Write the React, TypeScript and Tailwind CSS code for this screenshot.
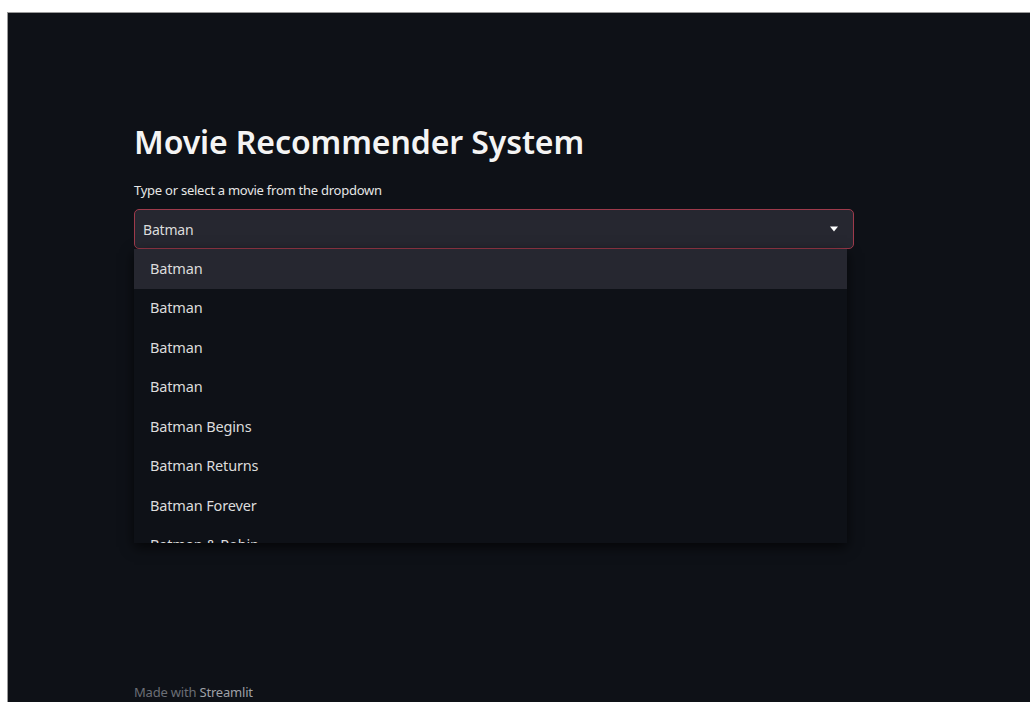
import React from "react";

const movies = [
  "Batman",
  "Batman",
  "Batman",
  "Batman",
  "Batman Begins",
  "Batman Returns",
  "Batman Forever",
  "Batman & Robin",
];

export default function App() {
  return (
    <div className="h-[702px] w-[1030px] overflow-hidden bg-white pl-[7px] pt-[12px]">
      <div
        className="relative flex h-[690px] flex-col border-l border-t border-[#9a9a9a] bg-[#0e1117] text-[#fafafa]"
        style={{ fontFamily: '"Noto Sans", "Open Sans", sans-serif' }}
      >
        <div className="ml-[126px] w-[720px] pt-[108px]">
          <h1 className="text-[32px] font-semibold leading-[42px] tracking-[-0.1px] text-[#f4f4f4]">
            Movie Recommender System
          </h1>
          <p className="mt-[18px] text-[13px] leading-[18px] tracking-[-0.25px] text-[#e6e6e6]">
            Type or select a movie from the dropdown
          </p>
          <div className="relative mt-[10px]">
            <div className="flex h-[40px] items-center justify-between rounded-[5px] border border-solid border-[#9e3a4b] bg-[#262730] pl-[8px] pr-[14px]">
              <span className="text-[14px] tracking-[-0.2px] text-[#dcdcdc]">Batman</span>
              <svg width="10" height="6" viewBox="0 0 10 6">
                <path d="M1 0.5 H9 L5 5.5 Z" fill="#ffffff" />
              </svg>
            </div>
            <ul className="absolute left-0 top-[40px] z-10 h-[294px] w-[713px] overflow-hidden bg-[#0e1117] shadow-[0_4px_12px_rgba(0,0,0,0.7)]">
              {movies.map((m, i) => (
                <li
                  key={i}
                  className={`flex h-[39.5px] items-center pl-[16px] text-[14.5px] tracking-[-0.15px] text-[#dcdcdc] ${
                    i === 0 ? "bg-[#262730]" : ""
                  }`}
                >
                  {m}
                </li>
              ))}
            </ul>
          </div>
        </div>
        <div className="mt-auto ml-[126px] pb-[1px] text-[13px] leading-[18px] tracking-[-0.2px] text-[#6b6e76]">
          Made with <span className="text-[#9ea0a6]">Streamlit</span>
        </div>
      </div>
    </div>
  );
}
